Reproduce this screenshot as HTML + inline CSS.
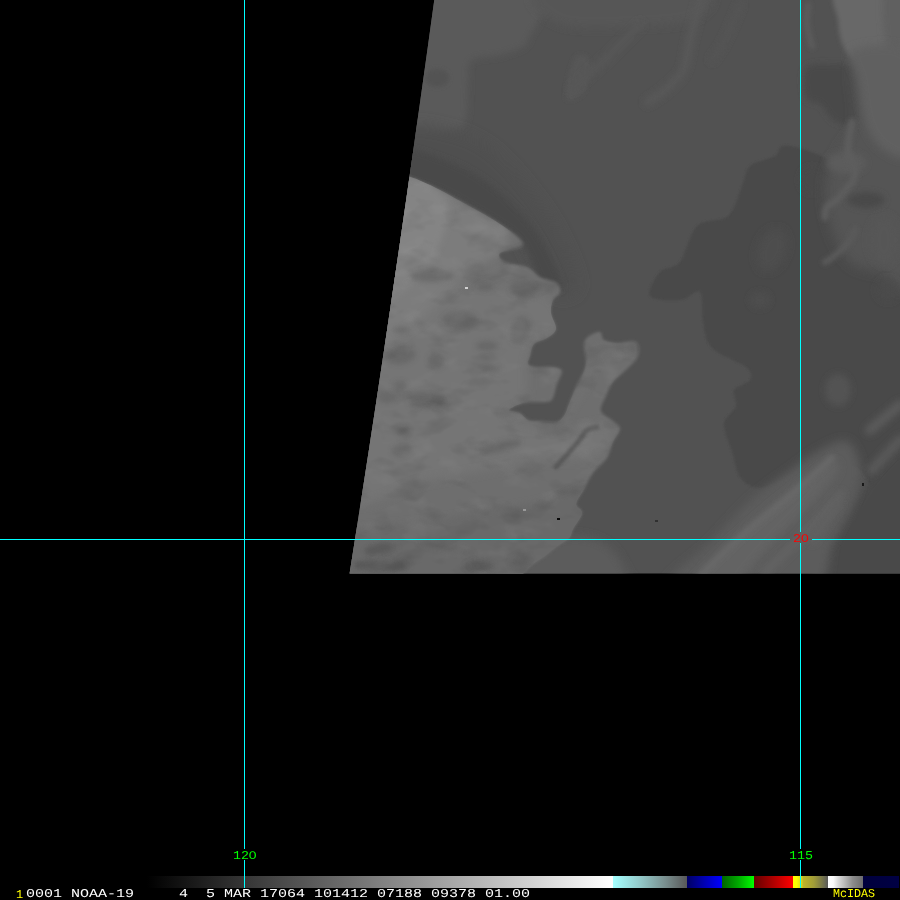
<!DOCTYPE html>
<html lang="en"><head><meta charset="utf-8"><title>McIDAS NOAA-19</title>
<style>
html,body{margin:0;padding:0;background:#000;}
body{width:900px;height:900px;position:relative;overflow:hidden;font-family:"Liberation Mono",monospace;}
svg{position:absolute;left:0;top:0;display:block}
.z{font-family:"Liberation Sans",sans-serif;font-size:11.2px;display:inline-block;width:7.2px;text-align:center;transform:scaleX(1.12);}
.t{position:absolute;white-space:pre;font-size:12px;line-height:12px;text-rendering:geometricPrecision;transform-origin:0 0;font-family:"Liberation Mono",monospace;}
</style></head><body>
<svg width="900" height="900" viewBox="0 0 900 900">
<defs>
<clipPath id="sw"><path d="M434.28,0 L427.39,50 L420.40,100 L413.32,150 L406.15,200 L398.88,250 L391.52,300 L384.07,350 L376.52,400 L368.88,450 L361.14,500 L353.31,550 L349.60,573.5 L900,573.5 L900,0 Z"/></clipPath>
</defs>
<filter id="nzd" filterUnits="userSpaceOnUse" x="340" y="0" width="560" height="574" color-interpolation-filters="sRGB"><feTurbulence type="fractalNoise" baseFrequency="0.028 0.05" numOctaves="3" seed="7"/><feColorMatrix type="matrix" values="0 0 0 0 0  0 0 0 0 0  0 0 0 0 0  2.6 0 0 0 -1.32"/></filter>
<filter id="nzl" filterUnits="userSpaceOnUse" x="340" y="0" width="560" height="574" color-interpolation-filters="sRGB"><feTurbulence type="fractalNoise" baseFrequency="0.03 0.05" numOctaves="3" seed="23"/><feColorMatrix type="matrix" values="0 0 0 0 1  0 0 0 0 1  0 0 0 0 1  2.4 0 0 0 -1.25"/></filter>
<rect width="900" height="900" fill="#000"/>
<g clip-path="url(#sw)">
<rect x="340" y="0" width="560" height="574" fill="#525252"/>

<defs><filter id="b1" filterUnits="userSpaceOnUse" x="300" y="-50" width="650" height="680"><feGaussianBlur stdDeviation="1"/></filter><filter id="b1_5" filterUnits="userSpaceOnUse" x="300" y="-50" width="650" height="680"><feGaussianBlur stdDeviation="1.5"/></filter><filter id="b2" filterUnits="userSpaceOnUse" x="300" y="-50" width="650" height="680"><feGaussianBlur stdDeviation="2"/></filter><filter id="b2_5" filterUnits="userSpaceOnUse" x="300" y="-50" width="650" height="680"><feGaussianBlur stdDeviation="2.5"/></filter><filter id="b3" filterUnits="userSpaceOnUse" x="300" y="-50" width="650" height="680"><feGaussianBlur stdDeviation="3"/></filter><filter id="b3_5" filterUnits="userSpaceOnUse" x="300" y="-50" width="650" height="680"><feGaussianBlur stdDeviation="3.5"/></filter><filter id="b4" filterUnits="userSpaceOnUse" x="300" y="-50" width="650" height="680"><feGaussianBlur stdDeviation="4"/></filter><filter id="b5" filterUnits="userSpaceOnUse" x="300" y="-50" width="650" height="680"><feGaussianBlur stdDeviation="5"/></filter><filter id="b6" filterUnits="userSpaceOnUse" x="300" y="-50" width="650" height="680"><feGaussianBlur stdDeviation="6"/></filter><filter id="b7" filterUnits="userSpaceOnUse" x="300" y="-50" width="650" height="680"><feGaussianBlur stdDeviation="7"/></filter></defs>
<defs><clipPath id="c_deck"><path d="M395.0,176.0 C406.7,138.8 405.3,176.0 410.0,177.0 C414.7,178.0 418.0,179.8 423.0,182.0 C428.0,184.2 433.8,186.8 440.0,190.0 C446.2,193.2 453.3,197.3 460.0,201.0 C466.7,204.7 473.3,208.2 480.0,212.0 C486.7,215.8 493.3,219.5 500.0,224.0 C506.7,228.5 516.5,235.2 520.0,239.0 C523.5,242.8 524.3,244.7 521.0,247.0 C517.7,249.3 502.7,250.5 500.0,253.0 C497.3,255.5 500.5,259.7 505.0,262.0 C509.5,264.3 521.2,264.5 527.0,267.0 C532.8,269.5 535.0,274.3 540.0,277.0 C545.0,279.7 553.7,280.3 557.0,283.0 C560.3,285.7 560.7,290.2 560.0,293.0 C559.3,295.8 554.5,296.7 553.0,300.0 C551.5,303.3 550.5,308.2 551.0,313.0 C551.5,317.8 556.7,324.8 556.0,329.0 C555.3,333.2 550.7,335.5 547.0,338.0 C543.3,340.5 536.8,341.0 534.0,344.0 C531.2,347.0 531.0,352.7 530.0,356.0 C529.0,359.3 527.0,362.2 528.0,364.0 C529.0,365.8 531.8,366.5 536.0,367.0 C540.2,367.5 548.7,366.3 553.0,367.0 C557.3,367.7 561.3,368.2 562.0,371.0 C562.7,373.8 558.5,379.5 557.0,384.0 C555.5,388.5 554.7,395.0 553.0,398.0 C551.3,401.0 551.8,401.2 547.0,402.0 C542.2,402.8 530.3,401.7 524.0,403.0 C517.7,404.3 509.7,408.3 509.0,410.0 C508.3,411.7 516.8,411.3 520.0,413.0 C523.2,414.7 525.0,418.7 528.0,420.0 C531.0,421.3 533.3,420.7 538.0,421.0 C542.7,421.3 551.7,422.8 556.0,422.0 C560.3,421.2 561.8,419.0 564.0,416.0 C566.2,413.0 567.0,408.8 569.0,404.0 C571.0,399.2 573.5,392.5 576.0,387.0 C578.5,381.5 582.3,375.5 584.0,371.0 C585.7,366.5 586.0,364.5 586.0,360.0 C586.0,355.5 583.5,348.0 584.0,344.0 C584.5,340.0 586.3,338.0 589.0,336.0 C591.7,334.0 597.5,331.3 600.0,332.0 C602.5,332.7 601.0,338.2 604.0,340.0 C607.0,341.8 612.7,342.7 618.0,343.0 C623.3,343.3 632.7,339.8 636.0,342.0 C639.3,344.2 639.5,351.5 638.0,356.0 C636.5,360.5 631.2,364.7 627.0,369.0 C622.8,373.3 616.5,377.5 613.0,382.0 C609.5,386.5 608.0,391.2 606.0,396.0 C604.0,400.8 599.8,406.8 601.0,411.0 C602.2,415.2 609.8,418.0 613.0,421.0 C616.2,424.0 620.0,425.5 620.0,429.0 C620.0,432.5 615.2,437.2 613.0,442.0 C610.8,446.8 610.3,452.8 607.0,458.0 C603.7,463.2 596.8,467.8 593.0,473.0 C589.2,478.2 586.8,483.8 584.0,489.0 C581.2,494.2 576.3,500.0 576.0,504.0 C575.7,508.0 582.5,508.8 582.0,513.0 C581.5,517.2 575.2,524.8 573.0,529.0 C570.8,533.2 571.8,535.0 569.0,538.0 C566.2,541.0 560.0,544.0 556.0,547.0 C552.0,550.0 548.8,553.2 545.0,556.0 C541.2,558.8 536.7,561.0 533.0,564.0 C529.3,567.0 525.5,569.7 523.0,574.0 C520.5,578.3 550.2,587.3 518.0,590.0 C485.8,592.7 359.7,621.7 330.0,590.0 C300.3,558.3 329.2,469.0 340.0,400.0 C350.8,331.0 383.3,213.2 395.0,176.0Z"/></clipPath></defs>
<path d="M430.0,-10.0 C454.7,-21.7 529.7,-14.7 548.0,-10.0 C566.3,-5.3 543.0,10.5 540.0,18.0 C537.0,25.5 532.7,30.3 530.0,35.0 C527.3,39.7 529.0,42.7 524.0,46.0 C519.0,49.3 508.7,52.7 500.0,55.0 C491.3,57.3 477.3,55.8 472.0,60.0 C466.7,64.2 469.0,70.3 468.0,80.0 C467.0,89.7 468.2,109.7 466.0,118.0 C463.8,126.3 464.3,127.7 455.0,130.0 C445.7,132.3 419.2,143.7 410.0,132.0 C400.8,120.3 396.7,83.7 400.0,60.0 C403.3,36.3 405.3,1.7 430.0,-10.0Z" fill="#5a5a5a" filter="url(#b3_5)"/>
<path d="M449.0,78.0 C449.0,79.5 448.4,81.2 447.4,82.5 C446.4,83.8 444.7,85.0 443.0,85.8 C441.3,86.5 439.0,87.0 437.0,87.0 C435.0,87.0 432.7,86.5 431.0,85.8 C429.3,85.0 427.6,83.8 426.6,82.5 C425.6,81.2 425.0,79.5 425.0,78.0 C425.0,76.5 425.6,74.8 426.6,73.5 C427.6,72.2 429.3,71.0 431.0,70.2 C432.7,69.5 435.0,69.0 437.0,69.0 C439.0,69.0 441.3,69.5 443.0,70.2 C444.7,71.0 446.4,72.2 447.4,73.5 C448.4,74.8 449.0,76.5 449.0,78.0Z" fill="#525252" filter="url(#b2)"/>
<path d="M541.0,-10.0 C564.3,-15.7 674.0,-14.7 700.0,-10.0 C726.0,-5.3 707.0,12.0 697.0,18.0 C687.0,24.0 662.8,25.0 640.0,26.0 C617.2,27.0 576.5,30.0 560.0,24.0 C543.5,18.0 517.7,-4.3 541.0,-10.0Z" fill="#565656" filter="url(#b4)"/>
<path d="M575.0,58.0 C579.0,52.0 588.5,56.3 590.0,62.0 C591.5,67.7 588.0,86.0 584.0,92.0 C580.0,98.0 567.5,103.7 566.0,98.0 C564.5,92.3 571.0,64.0 575.0,58.0Z" fill="#575757" filter="url(#b2)"/>
<path d="M701.0,-2.0 C699.2,5.0 693.0,27.8 690.0,40.0 C687.0,52.2 687.2,62.7 683.0,71.0 C678.8,79.3 670.8,84.8 665.0,90.0 C659.2,95.2 650.8,100.0 648.0,102.0" fill="none" stroke="#595959" stroke-width="8" stroke-linecap="round" stroke-linejoin="round" filter="url(#b3)"/>
<path d="M640.0,25.0 C635.0,30.0 621.3,44.3 610.0,55.0 C598.7,65.7 578.3,83.3 572.0,89.0" fill="none" stroke="#575757" stroke-width="8" stroke-linecap="round" stroke-linejoin="round" filter="url(#b3)"/>
<path d="M740.0,5.0 C737.5,10.8 729.7,30.8 725.0,40.0 C720.3,49.2 714.2,56.7 712.0,60.0" fill="none" stroke="#555555" stroke-width="6" stroke-linecap="round" stroke-linejoin="round" filter="url(#b3)"/>
<path d="M405.0,128.0 C414.2,120.7 440.5,128.3 455.0,132.0 C469.5,135.7 479.8,140.7 492.0,150.0 C504.2,159.3 517.0,174.3 528.0,188.0 C539.0,201.7 549.7,216.0 558.0,232.0 C566.3,248.0 577.7,273.3 578.0,284.0 C578.3,294.7 566.3,296.7 560.0,296.0 C553.7,295.3 546.7,289.3 540.0,280.0 C533.3,270.7 530.0,251.3 520.0,240.0 C510.0,228.7 493.3,220.3 480.0,212.0 C466.7,203.7 453.3,196.0 440.0,190.0 C426.7,184.0 405.8,186.3 400.0,176.0 C394.2,165.7 395.8,135.3 405.0,128.0Z" fill="#4f4f4f" filter="url(#b7)"/>
<path d="M405.0,150.0 C411.7,147.0 427.8,153.7 440.0,158.0 C452.2,162.3 466.0,168.3 478.0,176.0 C490.0,183.7 501.7,193.7 512.0,204.0 C522.3,214.3 531.7,224.7 540.0,238.0 C548.3,251.3 560.0,275.3 562.0,284.0 C564.0,292.7 555.7,290.7 552.0,290.0 C548.3,289.3 545.3,288.3 540.0,280.0 C534.7,271.7 530.0,251.3 520.0,240.0 C510.0,228.7 493.3,220.3 480.0,212.0 C466.7,203.7 453.3,196.0 440.0,190.0 C426.7,184.0 405.8,182.7 400.0,176.0 C394.2,169.3 398.3,153.0 405.0,150.0Z" fill="#4a4a4a" filter="url(#b3)"/>
<path d="M650.0,296.0 C646.7,291.3 655.0,277.7 660.0,272.0 C665.0,266.3 673.8,269.7 680.0,262.0 C686.2,254.3 689.0,233.7 697.0,226.0 C705.0,218.3 720.5,222.7 728.0,216.0 C735.5,209.3 738.3,194.3 742.0,186.0 C745.7,177.7 744.5,171.0 750.0,166.0 C755.5,161.0 769.7,159.3 775.0,156.0 C780.3,152.7 777.8,147.3 782.0,146.0 C786.2,144.7 792.0,145.7 800.0,148.0 C808.0,150.3 820.0,155.5 830.0,160.0 C840.0,164.5 846.7,170.0 860.0,175.0 C873.3,180.0 901.7,132.5 910.0,190.0 C918.3,247.5 918.3,473.3 910.0,520.0 C901.7,566.7 873.3,480.8 860.0,470.0 C846.7,459.2 840.0,455.0 830.0,455.0 C820.0,455.0 808.8,465.5 800.0,470.0 C791.2,474.5 784.0,479.0 777.0,482.0 C770.0,485.0 764.2,488.8 758.0,488.0 C751.8,487.2 744.3,483.0 740.0,477.0 C735.7,471.0 734.7,460.8 732.0,452.0 C729.3,443.2 723.3,431.7 724.0,424.0 C724.7,416.3 734.3,411.7 736.0,406.0 C737.7,400.3 731.7,394.3 734.0,390.0 C736.3,385.7 748.0,383.8 750.0,380.0 C752.0,376.2 752.3,372.3 746.0,367.0 C739.7,361.7 719.2,355.5 712.0,348.0 C704.8,340.5 705.0,331.3 703.0,322.0 C701.0,312.7 703.8,295.7 700.0,292.0 C696.2,288.3 688.3,299.3 680.0,300.0 C671.7,300.7 653.3,300.7 650.0,296.0Z" fill="#494949" filter="url(#b1)"/>
<path d="M785.2,254.8 C783.9,258.2 781.8,261.9 779.6,264.5 C777.4,267.1 774.6,269.3 772.1,270.3 C769.5,271.3 766.7,271.5 764.5,270.7 C762.3,269.9 760.2,267.9 758.9,265.5 C757.6,263.1 756.9,259.6 756.8,256.2 C756.8,252.8 757.6,248.7 758.8,245.2 C760.1,241.8 762.2,238.1 764.4,235.5 C766.6,232.9 769.4,230.7 771.9,229.7 C774.5,228.7 777.3,228.5 779.5,229.3 C781.7,230.1 783.8,232.1 785.1,234.5 C786.4,236.9 787.1,240.4 787.2,243.8 C787.2,247.2 786.4,251.3 785.2,254.8Z" fill="#4e4e4e" filter="url(#b4)"/>
<path d="M851.0,390.0 C851.0,392.7 850.3,395.7 849.3,398.0 C848.2,400.3 846.4,402.5 844.5,403.9 C842.6,405.2 840.2,406.0 838.0,406.0 C835.8,406.0 833.4,405.2 831.5,403.9 C829.6,402.5 827.8,400.3 826.7,398.0 C825.7,395.7 825.0,392.7 825.0,390.0 C825.0,387.3 825.7,384.3 826.7,382.0 C827.8,379.7 829.6,377.5 831.5,376.1 C833.4,374.8 835.8,374.0 838.0,374.0 C840.2,374.0 842.6,374.8 844.5,376.1 C846.4,377.5 848.2,379.7 849.3,382.0 C850.3,384.3 851.0,387.3 851.0,390.0Z" fill="#525252" filter="url(#b3)"/>
<path d="M770.0,300.0 C770.0,301.3 769.5,302.8 768.7,304.0 C767.8,305.2 766.4,306.3 765.0,306.9 C763.6,307.6 761.7,308.0 760.0,308.0 C758.3,308.0 756.4,307.6 755.0,306.9 C753.6,306.3 752.2,305.2 751.3,304.0 C750.5,302.8 750.0,301.3 750.0,300.0 C750.0,298.7 750.5,297.2 751.3,296.0 C752.2,294.8 753.6,293.7 755.0,293.1 C756.4,292.4 758.3,292.0 760.0,292.0 C761.7,292.0 763.6,292.4 765.0,293.1 C766.4,293.7 767.8,294.8 768.7,296.0 C769.5,297.2 770.0,298.7 770.0,300.0Z" fill="#4d4d4d" filter="url(#b3)"/>
<path d="M806.0,68.0 C810.5,62.3 824.7,63.7 833.0,64.0 C841.3,64.3 850.8,63.3 856.0,70.0 C861.2,76.7 863.3,95.3 864.0,104.0 C864.7,112.7 864.7,119.0 860.0,122.0 C855.3,125.0 842.7,125.0 836.0,122.0 C829.3,119.0 825.0,108.0 820.0,104.0 C815.0,100.0 808.3,104.0 806.0,98.0 C803.7,92.0 801.5,73.7 806.0,68.0Z" fill="#4a4a4a" filter="url(#b3)"/>
<path d="M824.0,180.0 C824.0,182.2 823.4,184.6 822.4,186.5 C821.4,188.4 819.7,190.2 818.0,191.3 C816.3,192.3 814.0,193.0 812.0,193.0 C810.0,193.0 807.7,192.3 806.0,191.3 C804.3,190.2 802.6,188.4 801.6,186.5 C800.6,184.6 800.0,182.2 800.0,180.0 C800.0,177.8 800.6,175.4 801.6,173.5 C802.6,171.6 804.3,169.8 806.0,168.7 C807.7,167.7 810.0,167.0 812.0,167.0 C814.0,167.0 816.3,167.7 818.0,168.7 C819.7,169.8 821.4,171.6 822.4,173.5 C823.4,175.4 824.0,177.8 824.0,180.0Z" fill="#4a4a4a" filter="url(#b3)"/>
<path d="M835.0,540.0 C845.0,521.7 857.5,494.2 870.0,480.0 C882.5,465.8 903.3,436.7 910.0,455.0 C916.7,473.3 926.7,567.5 910.0,590.0 C893.3,612.5 822.5,598.3 810.0,590.0 C797.5,581.7 825.0,558.3 835.0,540.0Z" fill="#4a4a4a" filter="url(#b4)"/>
<path d="M856.0,60.0 C865.0,50.0 901.0,24.2 910.0,60.0 C919.0,95.8 915.0,239.7 910.0,275.0 C905.0,310.3 890.0,274.2 880.0,272.0 C870.0,269.8 858.3,269.8 850.0,262.0 C841.7,254.2 834.0,238.7 830.0,225.0 C826.0,211.3 824.3,192.5 826.0,180.0 C827.7,167.5 835.0,160.0 840.0,150.0 C845.0,140.0 853.3,135.0 856.0,120.0 C858.7,105.0 847.0,70.0 856.0,60.0Z" fill="#545454" filter="url(#b6)"/>
<path d="M838.0,-10.0 C850.0,-15.0 898.0,-22.7 910.0,-10.0 C922.0,2.7 915.0,53.0 910.0,66.0 C905.0,79.0 888.0,68.7 880.0,68.0 C872.0,67.3 867.3,64.3 862.0,62.0 C856.7,59.7 851.5,57.7 848.0,54.0 C844.5,50.3 842.7,45.7 841.0,40.0 C839.3,34.3 838.5,28.3 838.0,20.0 C837.5,11.7 826.0,-5.0 838.0,-10.0Z" fill="#686868" filter="url(#b2)"/>
<path d="M884.0,-10.0 C887.7,-21.0 905.7,-21.7 910.0,-10.0 C914.3,1.7 913.7,49.0 910.0,60.0 C906.3,71.0 892.3,67.7 888.0,56.0 C883.7,44.3 880.3,1.0 884.0,-10.0Z" fill="#606060" filter="url(#b3)"/>
<path d="M852.0,50.0 C860.7,45.8 900.3,38.3 910.0,55.0 C919.7,71.7 914.3,134.2 910.0,150.0 C905.7,165.8 891.3,154.2 884.0,150.0 C876.7,145.8 870.3,136.7 866.0,125.0 C861.7,113.3 860.3,92.5 858.0,80.0 C855.7,67.5 843.3,54.2 852.0,50.0Z" fill="#606060" filter="url(#b4)"/>
<path d="M866.0,163.0 C866.0,164.8 865.0,166.9 863.3,168.5 C861.7,170.1 858.9,171.6 856.0,172.5 C853.1,173.4 849.3,174.0 846.0,174.0 C842.7,174.0 838.9,173.4 836.0,172.5 C833.1,171.6 830.3,170.1 828.7,168.5 C827.0,166.9 826.0,164.8 826.0,163.0 C826.0,161.2 827.0,159.1 828.7,157.5 C830.3,155.9 833.1,154.4 836.0,153.5 C838.9,152.6 842.7,152.0 846.0,152.0 C849.3,152.0 853.1,152.6 856.0,153.5 C858.9,154.4 861.7,155.9 863.3,157.5 C865.0,159.1 866.0,161.2 866.0,163.0Z" fill="#5c5c5c" filter="url(#b3)"/>
<path d="M852.0,122.0 C851.3,126.7 847.5,141.2 848.0,150.0 C848.5,158.8 856.3,167.2 855.0,175.0 C853.7,182.8 844.7,191.7 840.0,197.0 C835.3,202.3 829.5,203.7 827.0,207.0 C824.5,210.3 825.3,215.3 825.0,217.0" fill="none" stroke="#5d5d5d" stroke-width="7" stroke-linecap="round" stroke-linejoin="round" filter="url(#b2)"/>
<path d="M855.0,230.0 C853.8,232.2 851.7,238.5 848.0,243.0 C844.3,247.5 836.8,253.8 833.0,257.0 C829.2,260.2 826.3,261.2 825.0,262.0" fill="none" stroke="#5a5a5a" stroke-width="6" stroke-linecap="round" stroke-linejoin="round" filter="url(#b2)"/>
<path d="M808.0,5.0 C807.8,8.3 806.3,18.2 807.0,25.0 C807.7,31.8 811.2,42.5 812.0,46.0" fill="none" stroke="#5b5b5b" stroke-width="6" stroke-linecap="round" stroke-linejoin="round" filter="url(#b2)"/>
<path d="M885.0,200.0 C885.0,201.3 884.0,202.8 882.5,204.0 C880.9,205.2 878.2,206.3 875.5,206.9 C872.8,207.6 869.2,208.0 866.0,208.0 C862.8,208.0 859.2,207.6 856.5,206.9 C853.8,206.3 851.1,205.2 849.5,204.0 C848.0,202.8 847.0,201.3 847.0,200.0 C847.0,198.7 848.0,197.2 849.5,196.0 C851.1,194.8 853.8,193.7 856.5,193.1 C859.2,192.4 862.8,192.0 866.0,192.0 C869.2,192.0 872.8,192.4 875.5,193.1 C878.2,193.7 880.9,194.8 882.5,196.0 C884.0,197.2 885.0,198.7 885.0,200.0Z" fill="#4a4a4a" filter="url(#b3)"/>
<path d="M898.0,240.0 C898.0,244.0 897.3,248.5 896.1,252.0 C895.0,255.5 893.0,258.8 891.0,260.8 C889.0,262.8 886.3,264.0 884.0,264.0 C881.7,264.0 879.0,262.8 877.0,260.8 C875.0,258.8 873.0,255.5 871.9,252.0 C870.7,248.5 870.0,244.0 870.0,240.0 C870.0,236.0 870.7,231.5 871.9,228.0 C873.0,224.5 875.0,221.2 877.0,219.2 C879.0,217.2 881.7,216.0 884.0,216.0 C886.3,216.0 889.0,217.2 891.0,219.2 C893.0,221.2 895.0,224.5 896.1,228.0 C897.3,231.5 898.0,236.0 898.0,240.0Z" fill="#565656" filter="url(#b4)"/>
<path d="M898.0,290.0 C898.0,291.7 897.5,293.6 896.7,295.0 C895.8,296.4 894.4,297.8 893.0,298.7 C891.6,299.5 889.7,300.0 888.0,300.0 C886.3,300.0 884.4,299.5 883.0,298.7 C881.6,297.8 880.2,296.4 879.3,295.0 C878.5,293.6 878.0,291.7 878.0,290.0 C878.0,288.3 878.5,286.4 879.3,285.0 C880.2,283.6 881.6,282.2 883.0,281.3 C884.4,280.5 886.3,280.0 888.0,280.0 C889.7,280.0 891.6,280.5 893.0,281.3 C894.4,282.2 895.8,283.6 896.7,285.0 C897.5,286.4 898.0,288.3 898.0,290.0Z" fill="#4c4c4c" filter="url(#b4)"/>
<path d="M668.0,592.0 C652.2,583.3 699.2,555.3 713.0,540.0 C726.8,524.7 738.0,511.7 751.0,500.0 C764.0,488.3 779.5,478.3 791.0,470.0 C802.5,461.7 810.7,454.8 820.0,450.0 C829.3,445.2 840.3,438.3 847.0,441.0 C853.7,443.7 858.8,456.2 860.0,466.0 C861.2,475.8 858.5,487.7 854.0,500.0 C849.5,512.3 840.7,524.7 833.0,540.0 C825.3,555.3 835.5,583.3 808.0,592.0 C780.5,600.7 683.8,600.7 668.0,592.0Z" fill="#5c5c5c" filter="url(#b5)"/>
<path d="M690.0,590.0 C688.3,583.0 711.7,561.7 725.0,548.0 C738.3,534.3 756.7,519.3 770.0,508.0 C783.3,496.7 795.0,487.7 805.0,480.0 C815.0,472.3 824.5,463.7 830.0,462.0 C835.5,460.3 840.5,463.7 838.0,470.0 C835.5,476.3 824.7,489.2 815.0,500.0 C805.3,510.8 791.7,522.5 780.0,535.0 C768.3,547.5 752.5,565.8 745.0,575.0 C737.5,584.2 744.2,587.5 735.0,590.0 C725.8,592.5 691.7,597.0 690.0,590.0Z" fill="#636363" filter="url(#b4)"/>
<path d="M698.0,578.0 C705.3,571.0 726.7,549.7 742.0,536.0 C757.3,522.3 775.0,509.0 790.0,496.0 C805.0,483.0 825.0,464.3 832.0,458.0" fill="none" stroke="#676767" stroke-width="7" stroke-linecap="round" stroke-linejoin="round" filter="url(#b2)"/>
<path d="M765.0,572.0 C771.3,565.8 790.5,547.8 803.0,535.0 C815.5,522.2 833.8,501.7 840.0,495.0" fill="none" stroke="#626262" stroke-width="9" stroke-linecap="round" stroke-linejoin="round" filter="url(#b3)"/>
<path d="M812.0,540.0 L838.0,505.0" fill="none" stroke="#606060" stroke-width="8" stroke-linecap="round" stroke-linejoin="round" filter="url(#b3)"/>
<path d="M872.0,470.0 L900.0,440.0" fill="none" stroke="#585858" stroke-width="10" stroke-linecap="round" stroke-linejoin="round" filter="url(#b3)"/>
<path d="M870.0,430.0 L900.0,405.0" fill="none" stroke="#5a5a5a" stroke-width="10" stroke-linecap="round" stroke-linejoin="round" filter="url(#b3)"/>
<path d="M536.0,548.0 C546.0,539.0 563.0,536.3 575.0,536.0 C587.0,535.7 599.5,540.0 608.0,546.0 C616.5,552.0 623.0,564.7 626.0,572.0 C629.0,579.3 644.5,587.0 626.0,590.0 C607.5,593.0 530.0,597.0 515.0,590.0 C500.0,583.0 526.0,557.0 536.0,548.0Z" fill="#5b5b5b" filter="url(#b5)"/>
<path d="M395.0,176.0 C406.7,138.8 405.3,176.0 410.0,177.0 C414.7,178.0 418.0,179.8 423.0,182.0 C428.0,184.2 433.8,186.8 440.0,190.0 C446.2,193.2 453.3,197.3 460.0,201.0 C466.7,204.7 473.3,208.2 480.0,212.0 C486.7,215.8 493.3,219.5 500.0,224.0 C506.7,228.5 516.5,235.2 520.0,239.0 C523.5,242.8 524.3,244.7 521.0,247.0 C517.7,249.3 502.7,250.5 500.0,253.0 C497.3,255.5 500.5,259.7 505.0,262.0 C509.5,264.3 521.2,264.5 527.0,267.0 C532.8,269.5 535.0,274.3 540.0,277.0 C545.0,279.7 553.7,280.3 557.0,283.0 C560.3,285.7 560.7,290.2 560.0,293.0 C559.3,295.8 554.5,296.7 553.0,300.0 C551.5,303.3 550.5,308.2 551.0,313.0 C551.5,317.8 556.7,324.8 556.0,329.0 C555.3,333.2 550.7,335.5 547.0,338.0 C543.3,340.5 536.8,341.0 534.0,344.0 C531.2,347.0 531.0,352.7 530.0,356.0 C529.0,359.3 527.0,362.2 528.0,364.0 C529.0,365.8 531.8,366.5 536.0,367.0 C540.2,367.5 548.7,366.3 553.0,367.0 C557.3,367.7 561.3,368.2 562.0,371.0 C562.7,373.8 558.5,379.5 557.0,384.0 C555.5,388.5 554.7,395.0 553.0,398.0 C551.3,401.0 551.8,401.2 547.0,402.0 C542.2,402.8 530.3,401.7 524.0,403.0 C517.7,404.3 509.7,408.3 509.0,410.0 C508.3,411.7 516.8,411.3 520.0,413.0 C523.2,414.7 525.0,418.7 528.0,420.0 C531.0,421.3 533.3,420.7 538.0,421.0 C542.7,421.3 551.7,422.8 556.0,422.0 C560.3,421.2 561.8,419.0 564.0,416.0 C566.2,413.0 567.0,408.8 569.0,404.0 C571.0,399.2 573.5,392.5 576.0,387.0 C578.5,381.5 582.3,375.5 584.0,371.0 C585.7,366.5 586.0,364.5 586.0,360.0 C586.0,355.5 583.5,348.0 584.0,344.0 C584.5,340.0 586.3,338.0 589.0,336.0 C591.7,334.0 597.5,331.3 600.0,332.0 C602.5,332.7 601.0,338.2 604.0,340.0 C607.0,341.8 612.7,342.7 618.0,343.0 C623.3,343.3 632.7,339.8 636.0,342.0 C639.3,344.2 639.5,351.5 638.0,356.0 C636.5,360.5 631.2,364.7 627.0,369.0 C622.8,373.3 616.5,377.5 613.0,382.0 C609.5,386.5 608.0,391.2 606.0,396.0 C604.0,400.8 599.8,406.8 601.0,411.0 C602.2,415.2 609.8,418.0 613.0,421.0 C616.2,424.0 620.0,425.5 620.0,429.0 C620.0,432.5 615.2,437.2 613.0,442.0 C610.8,446.8 610.3,452.8 607.0,458.0 C603.7,463.2 596.8,467.8 593.0,473.0 C589.2,478.2 586.8,483.8 584.0,489.0 C581.2,494.2 576.3,500.0 576.0,504.0 C575.7,508.0 582.5,508.8 582.0,513.0 C581.5,517.2 575.2,524.8 573.0,529.0 C570.8,533.2 571.8,535.0 569.0,538.0 C566.2,541.0 560.0,544.0 556.0,547.0 C552.0,550.0 548.8,553.2 545.0,556.0 C541.2,558.8 536.7,561.0 533.0,564.0 C529.3,567.0 525.5,569.7 523.0,574.0 C520.5,578.3 550.2,587.3 518.0,590.0 C485.8,592.7 359.7,621.7 330.0,590.0 C300.3,558.3 329.2,469.0 340.0,400.0 C350.8,331.0 383.3,213.2 395.0,176.0Z" fill="#6e6e6e" filter="url(#b1_5)"/>
<path d="M520.0,530.0 C535.0,513.3 570.0,491.7 590.0,490.0 C610.0,488.3 631.7,503.3 640.0,520.0 C648.3,536.7 663.3,578.3 640.0,590.0 C616.7,601.7 520.0,600.0 500.0,590.0 C480.0,580.0 505.0,546.7 520.0,530.0Z" fill="#646464" clip-path="url(#c_deck)" filter="url(#b5)"/>
<path d="M340.0,280.0 C361.7,245.8 435.8,282.5 470.0,285.0 C504.2,287.5 530.0,287.5 545.0,295.0 C560.0,302.5 562.5,320.8 560.0,330.0 C557.5,339.2 535.8,338.3 530.0,350.0 C524.2,361.7 529.2,389.2 525.0,400.0 C520.8,410.8 499.2,410.0 505.0,415.0 C510.8,420.0 542.5,428.3 560.0,430.0 C577.5,431.7 603.3,420.8 610.0,425.0 C616.7,429.2 613.3,448.8 600.0,455.0 C586.7,461.2 558.3,457.8 530.0,462.0 C501.7,466.2 461.7,475.3 430.0,480.0 C398.3,484.7 355.0,523.3 340.0,490.0 C325.0,456.7 318.3,314.2 340.0,280.0Z" fill="#747474" clip-path="url(#c_deck)" filter="url(#b5)"/>
<path d="M380.0,170.0 C387.0,143.0 402.0,173.0 412.0,176.0 C422.0,179.0 429.5,182.7 440.0,188.0 C450.5,193.3 464.2,201.8 475.0,208.0 C485.8,214.2 500.0,218.0 505.0,225.0 C510.0,232.0 510.8,242.2 505.0,250.0 C499.2,257.8 480.8,263.7 470.0,272.0 C459.2,280.3 449.7,291.0 440.0,300.0 C430.3,309.0 423.7,319.7 412.0,326.0 C400.3,332.3 375.3,364.0 370.0,338.0 C364.7,312.0 373.0,197.0 380.0,170.0Z" fill="#7c7c7c" clip-path="url(#c_deck)" filter="url(#b5)"/>
<path d="M380.0,170.0 C386.2,150.0 403.3,173.3 412.0,176.0 C420.7,178.7 426.0,181.2 432.0,186.0 C438.0,190.8 446.3,196.3 448.0,205.0 C449.7,213.7 446.0,227.2 442.0,238.0 C438.0,248.8 431.0,261.0 424.0,270.0 C417.0,279.0 408.2,287.7 400.0,292.0 C391.8,296.3 378.3,316.3 375.0,296.0 C371.7,275.7 373.8,190.0 380.0,170.0Z" fill="#848484" clip-path="url(#c_deck)" filter="url(#b3)"/>
<path d="M330.0,535.0 C346.7,523.3 396.7,525.3 430.0,520.0 C463.3,514.7 501.7,508.0 530.0,503.0 C558.3,498.0 581.7,480.5 600.0,490.0 C618.3,499.5 633.3,543.3 640.0,560.0 C646.7,576.7 691.7,585.0 640.0,590.0 C588.3,595.0 381.7,599.2 330.0,590.0 C278.3,580.8 313.3,546.7 330.0,535.0Z" fill="#696969" clip-path="url(#c_deck)" filter="url(#b3)"/>
<path d="M562.0,420.0 C565.8,414.2 578.7,396.7 585.0,385.0 C591.3,373.3 592.8,355.8 600.0,350.0 C607.2,344.2 623.3,350.0 628.0,350.0" fill="none" stroke="#707070" stroke-width="10" stroke-linecap="round" stroke-linejoin="round" clip-path="url(#c_deck)" filter="url(#b2)"/>
<path d="M556.0,467.0 C559.7,462.8 572.8,448.2 578.0,442.0 C583.2,435.8 583.8,432.5 587.0,430.0 C590.2,427.5 595.3,427.5 597.0,427.0" fill="none" stroke="#5a5a5a" stroke-width="5" stroke-linecap="round" stroke-linejoin="round" clip-path="url(#c_deck)" filter="url(#b1_5)"/>
<path d="M454.0,276.0 C454.0,277.0 452.9,278.1 451.1,279.0 C449.2,279.9 446.2,280.7 443.0,281.2 C439.8,281.7 435.7,282.0 432.0,282.0 C428.3,282.0 424.2,281.7 421.0,281.2 C417.8,280.7 414.8,279.9 412.9,279.0 C411.1,278.1 410.0,277.0 410.0,276.0 C410.0,275.0 411.1,273.9 412.9,273.0 C414.8,272.1 417.8,271.3 421.0,270.8 C424.2,270.3 428.3,270.0 432.0,270.0 C435.7,270.0 439.8,270.3 443.0,270.8 C446.2,271.3 449.2,272.1 451.1,273.0 C452.9,273.9 454.0,275.0 454.0,276.0Z" fill="#606060" clip-path="url(#c_deck)" filter="url(#b2_5)" opacity="0.6"/>
<path d="M494.0,287.0 C494.0,287.7 493.5,288.4 492.8,289.0 C492.0,289.6 490.8,290.1 489.5,290.5 C488.2,290.8 486.5,291.0 485.0,291.0 C483.5,291.0 481.8,290.8 480.5,290.5 C479.2,290.1 478.0,289.6 477.2,289.0 C476.5,288.4 476.0,287.7 476.0,287.0 C476.0,286.3 476.5,285.6 477.2,285.0 C478.0,284.4 479.2,283.9 480.5,283.5 C481.8,283.2 483.5,283.0 485.0,283.0 C486.5,283.0 488.2,283.2 489.5,283.5 C490.8,283.9 492.0,284.4 492.8,285.0 C493.5,285.6 494.0,286.3 494.0,287.0Z" fill="#606060" clip-path="url(#c_deck)" filter="url(#b2_5)" opacity="0.6"/>
<path d="M537.8,292.4 C537.6,293.7 536.6,295.1 535.2,296.0 C533.9,297.0 531.8,297.7 529.7,298.0 C527.6,298.3 524.9,298.3 522.6,297.9 C520.3,297.5 517.8,296.6 515.9,295.6 C514.0,294.6 512.3,293.2 511.4,291.8 C510.4,290.5 510.0,288.9 510.2,287.6 C510.4,286.3 511.4,284.9 512.8,284.0 C514.1,283.0 516.2,282.3 518.3,282.0 C520.4,281.7 523.1,281.7 525.4,282.1 C527.7,282.5 530.2,283.4 532.1,284.4 C534.0,285.4 535.7,286.8 536.6,288.2 C537.6,289.5 538.0,291.1 537.8,292.4Z" fill="#606060" clip-path="url(#c_deck)" filter="url(#b2_5)" opacity="0.6"/>
<path d="M409.0,330.0 C409.0,330.5 408.6,331.1 407.9,331.5 C407.3,331.9 406.2,332.3 405.0,332.6 C403.8,332.8 402.3,333.0 401.0,333.0 C399.7,333.0 398.2,332.8 397.0,332.6 C395.8,332.3 394.7,331.9 394.1,331.5 C393.4,331.1 393.0,330.5 393.0,330.0 C393.0,329.5 393.4,328.9 394.1,328.5 C394.7,328.1 395.8,327.7 397.0,327.4 C398.2,327.2 399.7,327.0 401.0,327.0 C402.3,327.0 403.8,327.2 405.0,327.4 C406.2,327.7 407.3,328.1 407.9,328.5 C408.6,328.9 409.0,329.5 409.0,330.0Z" fill="#606060" clip-path="url(#c_deck)" filter="url(#b2_5)" opacity="0.6"/>
<path d="M415.8,353.4 C416.0,354.7 415.5,356.3 414.5,357.7 C413.5,359.0 411.6,360.5 409.6,361.5 C407.6,362.6 404.9,363.4 402.4,363.9 C399.9,364.3 397.1,364.4 394.8,364.1 C392.6,363.8 390.3,363.1 388.9,362.2 C387.5,361.3 386.5,359.9 386.2,358.6 C386.0,357.3 386.5,355.7 387.5,354.3 C388.5,353.0 390.4,351.5 392.4,350.5 C394.4,349.4 397.1,348.6 399.6,348.1 C402.1,347.7 404.9,347.6 407.2,347.9 C409.4,348.2 411.7,348.9 413.1,349.8 C414.5,350.7 415.5,352.1 415.8,353.4Z" fill="#606060" clip-path="url(#c_deck)" filter="url(#b2_5)" opacity="0.6"/>
<path d="M444.0,361.0 C444.0,362.3 443.6,363.8 442.9,365.0 C442.3,366.2 441.2,367.3 440.0,367.9 C438.8,368.6 437.3,369.0 436.0,369.0 C434.7,369.0 433.2,368.6 432.0,367.9 C430.8,367.3 429.7,366.2 429.1,365.0 C428.4,363.8 428.0,362.3 428.0,361.0 C428.0,359.7 428.4,358.2 429.1,357.0 C429.7,355.8 430.8,354.7 432.0,354.1 C433.2,353.4 434.7,353.0 436.0,353.0 C437.3,353.0 438.8,353.4 440.0,354.1 C441.2,354.7 442.3,355.8 442.9,357.0 C443.6,358.2 444.0,359.7 444.0,361.0Z" fill="#606060" clip-path="url(#c_deck)" filter="url(#b2_5)" opacity="0.6"/>
<path d="M498.0,346.0 C498.0,346.8 497.4,347.8 496.5,348.5 C495.6,349.2 494.1,349.9 492.5,350.3 C490.9,350.7 488.8,351.0 487.0,351.0 C485.2,351.0 483.1,350.7 481.5,350.3 C479.9,349.9 478.4,349.2 477.5,348.5 C476.6,347.8 476.0,346.8 476.0,346.0 C476.0,345.2 476.6,344.2 477.5,343.5 C478.4,342.8 479.9,342.1 481.5,341.7 C483.1,341.3 485.2,341.0 487.0,341.0 C488.8,341.0 490.9,341.3 492.5,341.7 C494.1,342.1 495.6,342.8 496.5,343.5 C497.4,344.2 498.0,345.2 498.0,346.0Z" fill="#606060" clip-path="url(#c_deck)" filter="url(#b2_5)" opacity="0.6"/>
<path d="M502.0,370.0 C502.0,370.5 501.5,371.1 500.7,371.5 C499.8,371.9 498.4,372.3 497.0,372.6 C495.6,372.8 493.7,373.0 492.0,373.0 C490.3,373.0 488.4,372.8 487.0,372.6 C485.6,372.3 484.2,371.9 483.3,371.5 C482.5,371.1 482.0,370.5 482.0,370.0 C482.0,369.5 482.5,368.9 483.3,368.5 C484.2,368.1 485.6,367.7 487.0,367.4 C488.4,367.2 490.3,367.0 492.0,367.0 C493.7,367.0 495.6,367.2 497.0,367.4 C498.4,367.7 499.8,368.1 500.7,368.5 C501.5,368.9 502.0,369.5 502.0,370.0Z" fill="#606060" clip-path="url(#c_deck)" filter="url(#b2_5)" opacity="0.6"/>
<path d="M407.0,386.0 C407.0,386.8 406.6,387.8 406.1,388.5 C405.5,389.2 404.5,389.9 403.5,390.3 C402.5,390.7 401.2,391.0 400.0,391.0 C398.8,391.0 397.5,390.7 396.5,390.3 C395.5,389.9 394.5,389.2 393.9,388.5 C393.4,387.8 393.0,386.8 393.0,386.0 C393.0,385.2 393.4,384.2 393.9,383.5 C394.5,382.8 395.5,382.1 396.5,381.7 C397.5,381.3 398.8,381.0 400.0,381.0 C401.2,381.0 402.5,381.3 403.5,381.7 C404.5,382.1 405.5,382.8 406.1,383.5 C406.6,384.2 407.0,385.2 407.0,386.0Z" fill="#606060" clip-path="url(#c_deck)" filter="url(#b2_5)" opacity="0.6"/>
<path d="M396.0,398.0 C396.0,398.8 395.5,399.8 394.8,400.5 C394.0,401.2 392.8,401.9 391.5,402.3 C390.2,402.7 388.5,403.0 387.0,403.0 C385.5,403.0 383.8,402.7 382.5,402.3 C381.2,401.9 380.0,401.2 379.2,400.5 C378.5,399.8 378.0,398.8 378.0,398.0 C378.0,397.2 378.5,396.2 379.2,395.5 C380.0,394.8 381.2,394.1 382.5,393.7 C383.8,393.3 385.5,393.0 387.0,393.0 C388.5,393.0 390.2,393.3 391.5,393.7 C392.8,394.1 394.0,394.8 394.8,395.5 C395.5,396.2 396.0,397.2 396.0,398.0Z" fill="#606060" clip-path="url(#c_deck)" filter="url(#b2_5)" opacity="0.6"/>
<path d="M446.9,400.7 C446.8,401.9 445.7,403.1 443.9,404.0 C442.2,404.9 439.4,405.6 436.4,405.9 C433.5,406.2 429.7,406.3 426.4,406.0 C423.1,405.7 419.3,405.0 416.5,404.2 C413.7,403.3 411.0,402.1 409.4,401.0 C407.9,399.8 407.0,398.4 407.1,397.3 C407.2,396.1 408.3,394.9 410.1,394.0 C411.8,393.1 414.6,392.4 417.6,392.1 C420.5,391.8 424.3,391.7 427.6,392.0 C430.9,392.3 434.7,393.0 437.5,393.8 C440.3,394.7 443.0,395.9 444.6,397.0 C446.1,398.2 447.0,399.6 446.9,400.7Z" fill="#606060" clip-path="url(#c_deck)" filter="url(#b2_5)" opacity="0.6"/>
<path d="M409.0,431.0 C409.0,431.8 408.7,432.8 408.2,433.5 C407.7,434.2 406.9,434.9 406.0,435.3 C405.1,435.7 404.0,436.0 403.0,436.0 C402.0,436.0 400.9,435.7 400.0,435.3 C399.1,434.9 398.3,434.2 397.8,433.5 C397.3,432.8 397.0,431.8 397.0,431.0 C397.0,430.2 397.3,429.2 397.8,428.5 C398.3,427.8 399.1,427.1 400.0,426.7 C400.9,426.3 402.0,426.0 403.0,426.0 C404.0,426.0 405.1,426.3 406.0,426.7 C406.9,427.1 407.7,427.8 408.2,428.5 C408.7,429.2 409.0,430.2 409.0,431.0Z" fill="#606060" clip-path="url(#c_deck)" filter="url(#b2_5)" opacity="0.6"/>
<path d="M411.8,448.3 C412.0,449.2 411.7,450.5 411.0,451.5 C410.4,452.4 409.2,453.5 407.8,454.2 C406.5,455.0 404.7,455.6 403.0,455.9 C401.4,456.2 399.5,456.2 398.0,456.0 C396.5,455.7 395.0,455.2 394.0,454.5 C393.0,453.8 392.3,452.7 392.2,451.7 C392.0,450.8 392.3,449.5 393.0,448.5 C393.6,447.6 394.8,446.5 396.2,445.8 C397.5,445.0 399.3,444.4 401.0,444.1 C402.6,443.8 404.5,443.8 406.0,444.0 C407.5,444.3 409.0,444.8 410.0,445.5 C411.0,446.2 411.7,447.3 411.8,448.3Z" fill="#606060" clip-path="url(#c_deck)" filter="url(#b2_5)" opacity="0.6"/>
<path d="M445.0,404.0 C445.0,404.7 444.1,405.4 442.6,406.0 C441.1,406.6 438.6,407.1 436.0,407.5 C433.4,407.8 430.0,408.0 427.0,408.0 C424.0,408.0 420.6,407.8 418.0,407.5 C415.4,407.1 412.9,406.6 411.4,406.0 C409.9,405.4 409.0,404.7 409.0,404.0 C409.0,403.3 409.9,402.6 411.4,402.0 C412.9,401.4 415.4,400.9 418.0,400.5 C420.6,400.2 424.0,400.0 427.0,400.0 C430.0,400.0 433.4,400.2 436.0,400.5 C438.6,400.9 441.1,401.4 442.6,402.0 C444.1,402.6 445.0,403.3 445.0,404.0Z" fill="#606060" clip-path="url(#c_deck)" filter="url(#b2_5)" opacity="0.6"/>
<path d="M397.8,547.6 C398.0,548.6 397.5,549.8 396.5,550.8 C395.5,551.9 393.7,553.1 391.8,553.9 C389.9,554.7 387.3,555.5 385.0,555.9 C382.7,556.3 380.1,556.5 378.0,556.3 C375.9,556.2 373.9,555.7 372.6,555.1 C371.3,554.4 370.4,553.4 370.2,552.4 C370.0,551.4 370.5,550.2 371.5,549.2 C372.5,548.1 374.3,546.9 376.2,546.1 C378.1,545.3 380.7,544.5 383.0,544.1 C385.3,543.7 387.9,543.5 390.0,543.7 C392.1,543.8 394.1,544.3 395.4,544.9 C396.7,545.6 397.6,546.6 397.8,547.6Z" fill="#606060" clip-path="url(#c_deck)" filter="url(#b2_5)" opacity="0.6"/>
<path d="M410.0,566.0 C410.0,567.0 408.7,568.1 406.7,569.0 C404.6,569.9 401.1,570.7 397.5,571.2 C393.9,571.7 389.2,572.0 385.0,572.0 C380.8,572.0 376.1,571.7 372.5,571.2 C368.9,570.7 365.4,569.9 363.3,569.0 C361.3,568.1 360.0,567.0 360.0,566.0 C360.0,565.0 361.3,563.9 363.3,563.0 C365.4,562.1 368.9,561.3 372.5,560.8 C376.1,560.3 380.8,560.0 385.0,560.0 C389.2,560.0 393.9,560.3 397.5,560.8 C401.1,561.3 404.6,562.1 406.7,563.0 C408.7,563.9 410.0,565.0 410.0,566.0Z" fill="#606060" clip-path="url(#c_deck)" filter="url(#b2_5)" opacity="0.6"/>
<path d="M473.4,553.8 C473.3,554.3 471.8,554.6 469.4,554.5 C467.0,554.4 463.2,554.0 459.2,553.5 C455.1,552.9 449.9,551.9 445.4,550.9 C440.8,550.0 435.7,548.7 431.8,547.6 C427.9,546.5 424.2,545.3 422.0,544.4 C419.8,543.5 418.5,542.7 418.6,542.2 C418.7,541.7 420.2,541.4 422.6,541.5 C425.0,541.6 428.8,542.0 432.8,542.5 C436.9,543.1 442.1,544.1 446.6,545.1 C451.2,546.0 456.3,547.3 460.2,548.4 C464.1,549.5 467.8,550.7 470.0,551.6 C472.2,552.5 473.5,553.3 473.4,553.8Z" fill="#606060" clip-path="url(#c_deck)" filter="url(#b2_5)" opacity="0.6"/>
<path d="M494.0,566.0 C494.0,567.0 493.3,568.1 492.1,569.0 C491.0,569.9 489.0,570.7 487.0,571.2 C485.0,571.7 482.3,572.0 480.0,572.0 C477.7,572.0 475.0,571.7 473.0,571.2 C471.0,570.7 469.0,569.9 467.9,569.0 C466.7,568.1 466.0,567.0 466.0,566.0 C466.0,565.0 466.7,563.9 467.9,563.0 C469.0,562.1 471.0,561.3 473.0,560.8 C475.0,560.3 477.7,560.0 480.0,560.0 C482.3,560.0 485.0,560.3 487.0,560.8 C489.0,561.3 491.0,562.1 492.1,563.0 C493.3,563.9 494.0,565.0 494.0,566.0Z" fill="#606060" clip-path="url(#c_deck)" filter="url(#b2_5)" opacity="0.6"/>
<path d="M529.4,556.6 C529.7,557.4 529.5,558.4 529.0,559.4 C528.5,560.4 527.4,561.5 526.2,562.4 C525.0,563.2 523.3,564.1 521.7,564.7 C520.1,565.3 518.3,565.7 516.8,565.8 C515.3,565.9 513.7,565.7 512.7,565.3 C511.7,564.9 510.9,564.2 510.6,563.4 C510.3,562.6 510.5,561.6 511.0,560.6 C511.5,559.6 512.6,558.5 513.8,557.6 C515.0,556.8 516.7,555.9 518.3,555.3 C519.9,554.7 521.7,554.3 523.2,554.2 C524.7,554.1 526.3,554.3 527.3,554.7 C528.3,555.1 529.1,555.8 529.4,556.6Z" fill="#606060" clip-path="url(#c_deck)" filter="url(#b2_5)" opacity="0.6"/>
<path d="M521.3,441.3 C521.5,442.1 520.6,443.3 519.1,444.5 C517.5,445.7 514.7,447.1 511.7,448.3 C508.8,449.6 504.8,450.9 501.3,451.8 C497.8,452.8 493.7,453.6 490.5,454.0 C487.3,454.4 484.2,454.6 482.2,454.3 C480.3,454.1 479.0,453.5 478.7,452.7 C478.5,451.9 479.4,450.7 480.9,449.5 C482.5,448.3 485.3,446.9 488.3,445.7 C491.2,444.4 495.2,443.1 498.7,442.2 C502.2,441.2 506.3,440.4 509.5,440.0 C512.7,439.6 515.8,439.4 517.8,439.7 C519.7,439.9 521.0,440.5 521.3,441.3Z" fill="#606060" clip-path="url(#c_deck)" filter="url(#b2_5)" opacity="0.6"/>
<path d="M529.4,333.4 C528.6,335.6 527.2,337.9 525.7,339.5 C524.3,341.2 522.3,342.5 520.6,343.1 C518.8,343.7 516.8,343.7 515.2,343.2 C513.6,342.6 512.1,341.3 511.2,339.7 C510.2,338.1 509.6,335.8 509.5,333.6 C509.4,331.4 509.8,328.8 510.6,326.6 C511.4,324.4 512.8,322.1 514.3,320.5 C515.7,318.8 517.7,317.5 519.4,316.9 C521.2,316.3 523.2,316.3 524.8,316.8 C526.4,317.4 527.9,318.7 528.8,320.3 C529.8,321.9 530.4,324.2 530.5,326.4 C530.6,328.6 530.2,331.2 529.4,333.4Z" fill="#606060" clip-path="url(#c_deck)" filter="url(#b2_5)" opacity="0.6"/>
<path d="M478.0,320.0 C478.0,321.3 477.1,322.8 475.6,324.0 C474.1,325.2 471.6,326.3 469.0,326.9 C466.4,327.6 463.0,328.0 460.0,328.0 C457.0,328.0 453.6,327.6 451.0,326.9 C448.4,326.3 445.9,325.2 444.4,324.0 C442.9,322.8 442.0,321.3 442.0,320.0 C442.0,318.7 442.9,317.2 444.4,316.0 C445.9,314.8 448.4,313.7 451.0,313.1 C453.6,312.4 457.0,312.0 460.0,312.0 C463.0,312.0 466.4,312.4 469.0,313.1 C471.6,313.7 474.1,314.8 475.6,316.0 C477.1,317.2 478.0,318.7 478.0,320.0Z" fill="#606060" clip-path="url(#c_deck)" filter="url(#b2_5)" opacity="0.6"/>
<path d="M406.0,566.0 C406.0,567.0 404.7,568.1 402.5,569.0 C400.3,569.9 396.8,570.7 393.0,571.2 C389.2,571.7 384.3,572.0 380.0,572.0 C375.7,572.0 370.8,571.7 367.0,571.2 C363.2,570.7 359.7,569.9 357.5,569.0 C355.3,568.1 354.0,567.0 354.0,566.0 C354.0,565.0 355.3,563.9 357.5,563.0 C359.7,562.1 363.2,561.3 367.0,560.8 C370.8,560.3 375.7,560.0 380.0,560.0 C384.3,560.0 389.2,560.3 393.0,560.8 C396.8,561.3 400.3,562.1 402.5,563.0 C404.7,563.9 406.0,565.0 406.0,566.0Z" fill="#585858" clip-path="url(#c_deck)" filter="url(#b2)" opacity="0.9"/>
<path d="M391.7,546.1 C391.9,546.9 391.4,548.0 390.4,548.9 C389.4,549.9 387.6,551.0 385.7,551.8 C383.9,552.6 381.3,553.4 379.0,553.9 C376.8,554.4 374.1,554.7 372.1,554.7 C370.0,554.7 368.0,554.4 366.7,554.0 C365.4,553.5 364.5,552.7 364.3,551.9 C364.1,551.1 364.6,550.0 365.6,549.1 C366.6,548.1 368.4,547.0 370.3,546.2 C372.1,545.4 374.7,544.6 377.0,544.1 C379.2,543.6 381.9,543.3 383.9,543.3 C386.0,543.3 388.0,543.6 389.3,544.0 C390.6,544.5 391.5,545.3 391.7,546.1Z" fill="#5a5a5a" clip-path="url(#c_deck)" filter="url(#b2)" opacity="0.9"/>
<path d="M492.0,566.0 C492.0,566.8 491.3,567.8 490.1,568.5 C489.0,569.2 487.0,569.9 485.0,570.3 C483.0,570.7 480.3,571.0 478.0,571.0 C475.7,571.0 473.0,570.7 471.0,570.3 C469.0,569.9 467.0,569.2 465.9,568.5 C464.7,567.8 464.0,566.8 464.0,566.0 C464.0,565.2 464.7,564.2 465.9,563.5 C467.0,562.8 469.0,562.1 471.0,561.7 C473.0,561.3 475.7,561.0 478.0,561.0 C480.3,561.0 483.0,561.3 485.0,561.7 C487.0,562.1 489.0,562.8 490.1,563.5 C491.3,564.2 492.0,565.2 492.0,566.0Z" fill="#5a5a5a" clip-path="url(#c_deck)" filter="url(#b2)" opacity="0.8"/>
<g clip-path="url(#c_deck)"><rect x="340" y="170" width="310" height="410" filter="url(#nzd)" opacity="0.10"/><rect x="340" y="170" width="310" height="410" filter="url(#nzl)" opacity="0.06"/></g>
<path d="M465.0,287.0 L468.0,287.0 L468.0,289.0 L465.0,289.0Z" fill="#d0d0d0"/>
<path d="M557.0,518.0 L560.0,518.0 L560.0,520.0 L557.0,520.0Z" fill="#080808"/>
<path d="M655.0,520.0 L658.0,520.0 L658.0,522.0 L655.0,522.0Z" fill="#303030"/>
<path d="M862.0,483.0 L864.0,483.0 L864.0,486.0 L862.0,486.0Z" fill="#181818"/>
<path d="M523.0,509.0 L526.0,509.0 L526.0,511.0 L523.0,511.0Z" fill="#989898"/>
</g>

<g fill="#00ffff" shape-rendering="crispEdges">
<rect x="244" y="0" width="1" height="849"/><rect x="244" y="860" width="1" height="28"/>
<rect x="800" y="0" width="1" height="532"/><rect x="800" y="543" width="1" height="306"/><rect x="800" y="860" width="1" height="28"/>
<rect x="0" y="539" width="790" height="1"/><rect x="812" y="539" width="88" height="1"/>
</g>
<defs>
<linearGradient id="cb0" x1="0" y1="0" x2="1" y2="0"><stop offset="0" stop-color="#000000"/><stop offset="1" stop-color="#ffffff"/></linearGradient>
<linearGradient id="cb1" x1="0" y1="0" x2="1" y2="0"><stop offset="0" stop-color="#a4ffff"/><stop offset="0.35" stop-color="#94cccc"/><stop offset="0.7" stop-color="#7a9090"/><stop offset="1" stop-color="#585858"/></linearGradient>
<linearGradient id="cb2" x1="0" y1="0" x2="1" y2="0"><stop offset="0" stop-color="#000064"/><stop offset="0.5" stop-color="#0000b4"/><stop offset="1" stop-color="#0000ff"/></linearGradient>
<linearGradient id="cb3" x1="0" y1="0" x2="1" y2="0"><stop offset="0" stop-color="#006400"/><stop offset="0.5" stop-color="#00a800"/><stop offset="1" stop-color="#00ff00"/></linearGradient>
<linearGradient id="cb4" x1="0" y1="0" x2="1" y2="0"><stop offset="0" stop-color="#640000"/><stop offset="0.5" stop-color="#b00000"/><stop offset="1" stop-color="#ff0000"/></linearGradient>
<linearGradient id="cb5" x1="0" y1="0" x2="1" y2="0"><stop offset="0" stop-color="#ffff00"/><stop offset="0.1" stop-color="#ffff00"/><stop offset="0.22" stop-color="#e0e018"/><stop offset="0.3" stop-color="#bcb428"/><stop offset="0.6" stop-color="#a09c38"/><stop offset="0.9" stop-color="#6c6c50"/><stop offset="1" stop-color="#585858"/></linearGradient>
<linearGradient id="cb6" x1="0" y1="0" x2="1" y2="0"><stop offset="0" stop-color="#ffffff"/><stop offset="0.15" stop-color="#fafafa"/><stop offset="0.3" stop-color="#d8d8d8"/><stop offset="0.5" stop-color="#b4b4b4"/><stop offset="0.7" stop-color="#8c8c8c"/><stop offset="1" stop-color="#6c6c6c"/></linearGradient>
<linearGradient id="cb7" x1="0" y1="0" x2="1" y2="0"><stop offset="0" stop-color="#00003c"/><stop offset="1" stop-color="#000044"/></linearGradient>
</defs>
<g shape-rendering="crispEdges">
<rect x="147" y="876" width="466" height="12" fill="url(#cb0)"/>
<rect x="613" y="876" width="74" height="12" fill="url(#cb1)"/>
<rect x="687" y="876" width="35" height="12" fill="url(#cb2)"/>
<rect x="722" y="876" width="32" height="12" fill="url(#cb3)"/>
<rect x="754" y="876" width="39" height="12" fill="url(#cb4)"/>
<rect x="793" y="876" width="35" height="12" fill="url(#cb5)"/>
<rect x="828" y="876" width="35" height="12" fill="url(#cb6)"/>
<rect x="863" y="876" width="36" height="12" fill="url(#cb7)"/>
</g>
<g fill="#00ffff" shape-rendering="crispEdges"><rect x="244" y="860" width="1" height="28"/><rect x="800" y="860" width="1" height="28"/></g>
</svg>
<div class="t" style="left:26px;top:888px;color:#fff;transform:scaleX(1.25)">0001 NOAA-19     4  5 MAR 17064 101412 07188 09378 01.00</div>
<div class="t" style="left:15.5px;top:889px;color:#ffff00;transform:scaleX(1.001)">1</div>
<div class="t" style="left:832.8px;top:888px;color:#ffff00;transform:scaleX(0.972)">McIDAS</div>
<div class="t" style="left:232.5px;top:850px;color:#00ff00;transform:scaleX(1.111)">12<span class="z">0</span></div>
<div class="t" style="left:788.5px;top:850px;color:#00ff00;transform:scaleX(1.111)">115</div>
<div class="t" style="left:792.5px;top:533px;color:#ff0000;transform:scaleX(1.111)">2<span class="z">0</span></div>
</body></html>
